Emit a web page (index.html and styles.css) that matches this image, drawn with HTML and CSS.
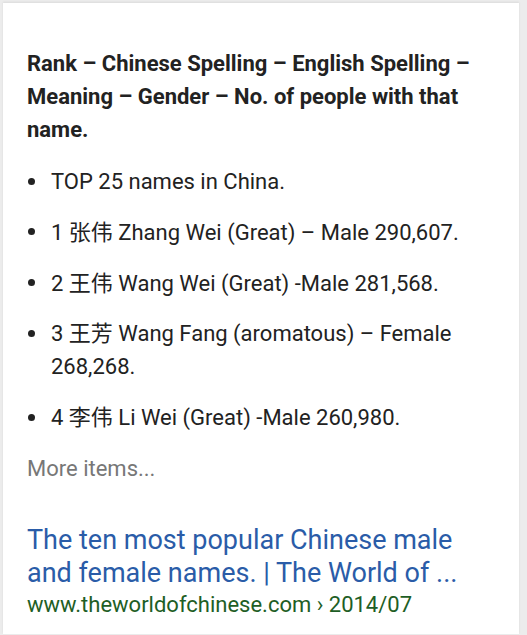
FILE: index.html
```html
<!DOCTYPE html>
<html lang="en">
<head>
    <meta charset="UTF-8">
    <meta name="viewport" content="width=device-width, initial-scale=1.0">
    <title>Chinese names</title>
    <link rel="stylesheet" href="styles.css">
</head>
<body>
    <div class="result-card">
        <div class="snippet">
            <h2 class="snippet-title">Rank – Chinese Spelling – English Spelling – Meaning – Gender – No. of people with that name.</h2>
            <ul class="snippet-list">
                <li>TOP 25 names in China.</li>
                <li>1 张伟 Zhang Wei (Great) – Male 290,607.</li>
                <li>2 王伟 Wang Wei (Great) -Male 281,568.</li>
                <li>3 王芳 Wang Fang (aromatous) – Female 268,268.</li>
                <li>4 李伟 Li Wei (Great) -Male 260,980.</li>
            </ul>
            <div class="more-items">More items...</div>
        </div>

        <a class="result-link" href="#">
            <span class="result-title">The ten most popular Chinese male and female names. | The World of ...</span>
            <span class="result-url">www.theworldofchinese.com › 2014/07</span>
        </a>
    </div>
</body>
</html>
```

FILE: styles.css
```css
* {
    margin: 0;
    padding: 0;
    box-sizing: border-box;
    font-family: Roboto, "Noto Sans CJK SC", sans-serif;
}

body {
    background-color: #ececec;
    padding: 3px 8px 0 3px;
    height: 635px;
    overflow: hidden;
}

.result-card {
    background-color: #fff;
    height: 631px;
    padding: 44px 24px 0;
    box-shadow: 0 -1px 2px rgba(0, 0, 0, 0.08);
}

.snippet-title {
    font-size: 22px;
    font-weight: bold;
    line-height: 33px;
    color: #222;
    margin-bottom: 19px;
}

.snippet-list {
    list-style: none;
    font-size: 22px;
    line-height: 33px;
    color: #222;
}

.snippet-list li {
    position: relative;
    padding-left: 24px;
    margin-bottom: 17.75px;
}

.snippet-list li:before {
    content: "";
    position: absolute;
    left: 1px;
    top: 12.5px;
    width: 7px;
    height: 7px;
    border-radius: 50%;
    background-color: #222;
}

.more-items {
    font-size: 22px;
    line-height: 33px;
    color: #777;
    margin-top: 3px;
}

.result-link {
    display: block;
    text-decoration: none;
    margin-top: 39px;
    padding-right: 24px;
}

.result-title {
    display: block;
    font-size: 27px;
    line-height: 33px;
    color: #2a5ca8;
}

.result-url {
    display: block;
    font-size: 22px;
    line-height: 30px;
    color: #1e5e25;
}
```
